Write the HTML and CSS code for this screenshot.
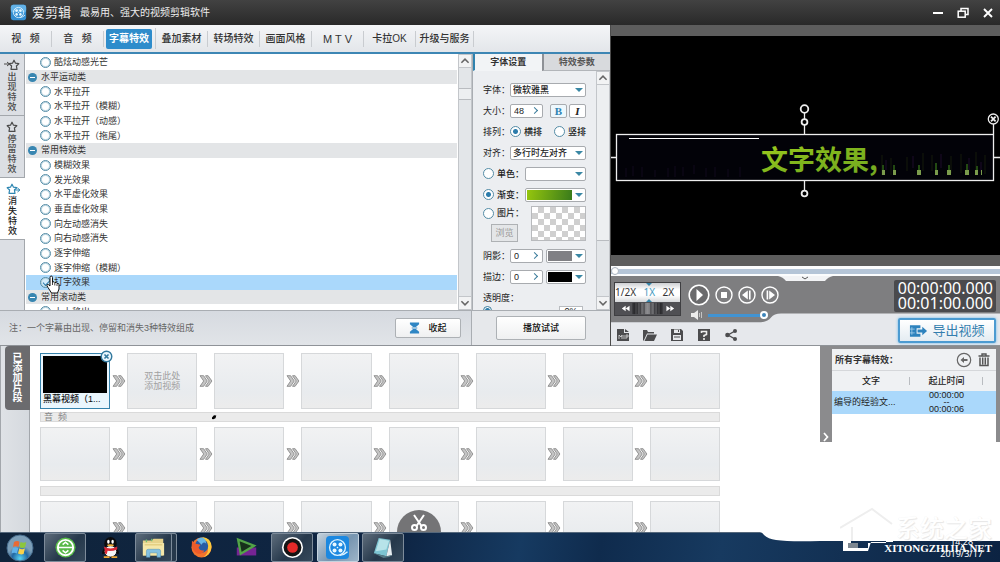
FILE: index.html
```html
<!DOCTYPE html>
<html lang="zh-CN">
<head>
<meta charset="utf-8">
<title>爱剪辑</title>
<link rel="stylesheet" href="styles.css">
</head>
<body>
<svg class="defs" aria-hidden="true">
  <defs>
    <symbol id="arrow" viewBox="0 0 14 12">
      <path d="M1 .7h3.6L8.300 6l-3.700 5.300H1L4.700 6z" fill="#c4c4c4" stroke="#8c8c8c" stroke-width=".9"/>
      <path d="M6.500 .7h2.600L12.900 6l-3.800 5.300H6.500L10.200 6z" fill="#c4c4c4" stroke="#8c8c8c" stroke-width=".9"/>
    </symbol>
    <symbol id="star" viewBox="0 0 12 12">
      <path d="M6 1.200l1.500 3 3.300.5-2.400 2.300.6 3.300H3l.6-3.300-2.400-2.300 3.300-.5z" fill="none" stroke="currentColor" stroke-width="1.200" stroke-linejoin="round"/>
    </symbol>
    <symbol id="up" viewBox="0 0 10 10"><path d="M2 6.500l3-3 3 3" fill="none" stroke="#666" stroke-width="1.300"/></symbol>
    <symbol id="down" viewBox="0 0 10 10"><path d="M2 3.500l3 3 3-3" fill="none" stroke="#666" stroke-width="1.300"/></symbol>
    <symbol id="reel" viewBox="0 0 20 20">
      <circle cx="10" cy="10" r="7.500" fill="none" stroke="#dff3ff" stroke-width="1.300"/>
      <g fill="#e8f7ff"><circle cx="7.200" cy="7.200" r="1.900"/><circle cx="12.800" cy="7.200" r="1.900"/><circle cx="7.200" cy="12.800" r="1.900"/><circle cx="12.800" cy="12.800" r="1.900"/><circle cx="10" cy="10" r=".8"/></g>
      <path d="M12 17.500q4.500-.5 7.500-3.500" fill="none" stroke="#dff3ff" stroke-width="1.300"/>
    </symbol>
  </defs>
</svg>

<header class="titlebar">
  <svg class="logo" viewBox="0 0 20 20"><rect x="1" y="1" width="18" height="18" rx="3" fill="#358fd2"/><rect x="1" y="1" width="18" height="9" rx="3" fill="#62b2e8"/><use href="#reel" x="2" y="2" width="16" height="16"/></svg>
  <h1 class="brand">爱剪辑</h1>
  <p class="slogan">最易用、强大的视频剪辑软件</p>
  <div class="window-buttons">
    <button aria-label="最小化"><svg viewBox="0 0 12 12"><path d="M1 6h10" stroke="#fff" stroke-width="2"/></svg></button>
    <button aria-label="还原"><svg viewBox="0 0 12 12" fill="none" stroke="#fff" stroke-width="1.500"><path d="M4 4V1.500h7v6H8.500"/><rect x="1.200" y="4.200" width="7" height="6"/></svg></button>
    <button aria-label="关闭"><svg viewBox="0 0 12 12"><path d="M2 2l8 8M10 2l-8 8" stroke="#fff" stroke-width="1.900"/></svg></button>
  </div>
</header>

<main class="workspace">
  <section class="editor">
    <nav class="tabs">
      <button class="tab">视&nbsp;&nbsp;&nbsp;频</button>
      <button class="tab">音&nbsp;&nbsp;&nbsp;频</button>
      <button class="tab tab-active"><span>字幕特效</span></button>
      <button class="tab">叠加素材</button>
      <button class="tab">转场特效</button>
      <button class="tab">画面风格</button>
      <button class="tab tab-latin">M T V</button>
      <button class="tab">卡拉OK</button>
      <button class="tab tab-wide">升级与服务</button>
    </nav>

    <div class="effects">
      <div class="phases">
        <button class="phase"><svg viewBox="0 0 16 12"><use href="#star" x="4" y="0" width="12" height="12"/><path d="M0 5h5M3 3l2.500 2L3 7" fill="none" stroke="currentColor"/></svg><span>出现特效</span></button>
        <button class="phase"><svg viewBox="0 0 16 12"><use href="#star" x="2" y="0" width="12" height="12"/></svg><span>停留特效</span></button>
        <button class="phase phase-active"><svg viewBox="0 0 16 12"><use href="#star" x="1" y="0" width="12" height="12"/><path d="M9 7h5M12.500 5L15 7l-2.500 2" fill="none" stroke="currentColor"/></svg><span>消失特效</span></button>
      </div>
      <div class="effect-window">
        <ul class="effect-list">
          <li class="effect"><label><input type="radio" name="fx">酷炫动感光芒</label></li>
          <li class="group"><button>水平运动类</button></li>
          <li class="effect"><label><input type="radio" name="fx">水平拉开</label></li>
          <li class="effect"><label><input type="radio" name="fx">水平拉开（模糊）</label></li>
          <li class="effect"><label><input type="radio" name="fx">水平拉开（动感）</label></li>
          <li class="effect"><label><input type="radio" name="fx">水平拉开（拖尾）</label></li>
          <li class="group"><button>常用特效类</button></li>
          <li class="effect"><label><input type="radio" name="fx">模糊效果</label></li>
          <li class="effect"><label><input type="radio" name="fx">发光效果</label></li>
          <li class="effect"><label><input type="radio" name="fx">水平虚化效果</label></li>
          <li class="effect"><label><input type="radio" name="fx">垂直虚化效果</label></li>
          <li class="effect"><label><input type="radio" name="fx">向左动感消失</label></li>
          <li class="effect"><label><input type="radio" name="fx">向右动感消失</label></li>
          <li class="effect"><label><input type="radio" name="fx">逐字伸缩</label></li>
          <li class="effect"><label><input type="radio" name="fx">逐字伸缩（模糊）</label></li>
          <li class="effect effect-selected"><label><input type="radio" name="fx" checked>打字效果</label>
            <svg class="pointer" viewBox="0 0 14 19"><path d="M4 11V2.500q0-1.500 1.200-1.500T6.500 2.500V7q1.800-.8 2.300.6 1.700-.6 2.200.7 1.900-.3 2 1.400v4.300L11.500 18h-6L2 12.500Q.2 10.300 1.200 9.600 2.400 9 4 11z" fill="#fff" stroke="#111"/><path d="M6.500 7v3M8.800 8v2.500M11 8.500V11" stroke="#111" stroke-width=".8"/></svg>
          </li>
          <li class="group"><button>常用滚动类</button></li>
          <li class="effect"><label><input type="radio" name="fx">上上移出</label></li>
        </ul>
      </div>
      <div class="scrollbar">
        <svg viewBox="0 0 10 10"><use href="#up"/></svg>
        <div class="scroll-track"><div class="scroll-thumb thumb-list"></div></div>
        <svg viewBox="0 0 10 10"><use href="#down"/></svg>
      </div>
    </div>
    <footer class="effects-footer">
      <p>注：一个字幕由出现、停留和消失3种特效组成</p>
      <button class="push collapse"><svg viewBox="0 0 12 14"><path d="M1 1h10v2L7.500 6h-3L1 3zM4.500 8h3L11 11v2H1v-2z" fill="#2f86c4"/><path d="M3 7h6" stroke="#2f86c4"/></svg>收起</button>
    </footer>

    <div class="settings">
      <div class="setting-tabs">
        <button class="setting-tab setting-tab-active">字体设置</button>
        <button class="setting-tab">特效参数</button>
      </div>
      <div class="setting-body">
        <form class="form">
          <div class="row"><label class="name" for="font">字体：</label><span class="select"><select id="font"><option>微软雅黑</option></select></span></div>
          <div class="row"><label class="name" for="size">大小：</label><span class="stepper"><input id="size" value="48"><button type="button" aria-label="调整大小"></button></span><span class="styles"><button type="button" class="mini bold">B</button><button type="button" class="mini italic">I</button></span></div>
          <div class="row"><span class="name">排列：</span><label class="option"><input type="radio" name="dir" checked>横排</label><label class="option option-last"><input type="radio" name="dir">竖排</label></div>
          <div class="row"><label class="name" for="align">对齐：</label><span class="select"><select id="align"><option>多行时左对齐</option></select></span></div>
          <div class="row"><label class="option"><input type="radio" name="fill">单色：</label><button type="button" class="swatch" aria-label="单色"><i></i></button></div>
          <div class="row"><label class="option"><input type="radio" name="fill" checked>渐变：</label><button type="button" class="swatch" aria-label="渐变"><i class="green"></i></button></div>
          <div class="picture">
            <div class="picture-side"><label class="option"><input type="radio" name="fill">图片：</label><button type="button" class="browse" disabled>浏览</button></div>
            <div class="checker"></div>
          </div>
          <div class="row"><label class="name" for="shadow">阴影：</label><span class="stepper"><input id="shadow" value="0"><button type="button" aria-label="调整阴影"></button></span><button type="button" class="swatch swatch-small" aria-label="阴影颜色"><i class="gray"></i></button></div>
          <div class="row"><label class="name" for="stroke">描边：</label><span class="stepper"><input id="stroke" value="0"><button type="button" aria-label="调整描边"></button></span><button type="button" class="swatch swatch-small" aria-label="描边颜色"><i class="black"></i></button></div>
          <div class="row"><label for="opacity">透明度：</label></div>
          <div class="row row-slider"><input id="opacity" class="range" type="range" value="0"><output for="opacity">0%</output></div>
        </form>
        <div class="scrollbar">
          <svg viewBox="0 0 10 10"><use href="#up"/></svg>
          <div class="scroll-track"><div class="scroll-thumb thumb-form"></div></div>
          <svg viewBox="0 0 10 10"><use href="#down"/></svg>
        </div>
      </div>
    </div>
    <footer class="settings-footer"><button class="push">播放试试</button></footer>
  </section>

  <section class="preview">
    <div class="stage">
      <svg viewBox="0 0 389 219">
        <defs>
          <linearGradient id="lime" x1="0" y1="0" x2="1" y2="1"><stop offset="0" stop-color="#a2cf1e"/><stop offset=".5" stop-color="#7fb41d"/><stop offset="1" stop-color="#73a822"/></linearGradient>
        </defs>
        <rect x="5" y="98.500" width="378" height="46" fill="#020208"/>
        <g stroke="#10091d" stroke-width="1"><path d="M15 132v9M22 130v10M31 131v10M44 134v7M57 132v9M64 130v11M72 131v9M83 129v9M95 132v9M104 131v10M117 133v8M129 131v10"/><path d="M271 119v20M280 122v17M296 121v14M312 117v18M321 119v16M340 120v17M350 118v19M365 116v22M374 119v19" stroke="#141b0b"/><path d="M275 124v10M302 120v12M330 118v14M358 122v12M370 126v10" stroke="#1d0a2b"/></g>
        <g fill="none" stroke="#eee" stroke-width="1.300"><rect x="5.500" y="98.500" width="377" height="46"/><path d="M0 121.500h5.500M382.500 121.500h6.500M193.500 98v-9M193.500 83v-6M193.500 145v9M382.500 98V88"/><g stroke-width="1.800"><circle cx="193.500" cy="73" r="3.800"/><circle cx="193.500" cy="86" r="2.900"/><circle cx="193.500" cy="157.500" r="2.900"/></g><circle cx="382.300" cy="83" r="5"/><path d="M380 80.700l4.600 4.600M384.600 80.700l-4.600 4.600" stroke-width="1.800"/></g>
        <path d="M18 102.500h130" stroke="#fff" stroke-width="1.200"/>
        <text x="150" y="134" class="caption" fill="url(#lime)">文字效果,</text>
        <g fill="#7b9c4c"><path d="M271 134h3v5h-3zM282 134h3v5h-3zM306 134h4v5h-4zM324 134h3v5h-3zM336 134h4v5h-4zM354 134h4v5h-4zM364 134h3v5h-3zM370 134h1v5h-1z"/></g><path d="M272 129v5M283 129v5M308 129v5M325 127v7M338 129v5M356 128v6M366 130v4" stroke="#234a12" stroke-width="2"/>
      </svg>
    </div>
    <div class="seek"><input class="seek-range" type="range" value="0" aria-label="播放位置"></div>
    <div class="controls">
      <svg class="controls-shape" viewBox="0 0 389 70" preserveAspectRatio="none"><path d="M0 0H389V38H170Q163 38 160 42T150 47H0z" fill="#7e7e80"/><path d="M167 0h55q-5 1-8 5h-39q-3-4-8-5z" fill="#f2f3f5"/><path d="M191 1l3 2 3-2" fill="none" stroke="#555"/></svg>
      <div class="control-left">
        <div class="transport">
          <div class="speed">
            <div class="speed-values"><span>1/2X</span><span class="speed-on">1X</span><span>2X</span></div>
            <svg class="jog" viewBox="0 0 67 14" preserveAspectRatio="none"><defs><linearGradient id="wheel"><stop offset="0" stop-color="#2b2b2e"/><stop offset=".5" stop-color="#8d8d90"/><stop offset="1" stop-color="#2b2b2e"/></linearGradient></defs><rect width="67" height="14" fill="#505054"/><path d="M11 4L7 7l4 3zM15 4l-4 3 4 3zM53 4l4 3-4 3zM57 4l4 3-4 3z" fill="#fff"/><rect x="18" y="1" width="31" height="12" fill="url(#wheel)"/><g stroke="#242427" stroke-width=".7"><path d="M20 1v12M23 1v12M26 1v12M30 1v12M37 1v12M41 1v12M44 1v12M47 1v12"/></g></svg>
          </div>
          <div class="play-column">
            <div class="play-row">
              <button class="play" aria-label="播放"><svg viewBox="0 0 22 22"><circle cx="11" cy="11" r="9.800" fill="#6a6a6c" stroke="#fff" stroke-width="1.600"/><path d="M8.500 5l6.500 6-6.500 6z" fill="#fff"/></svg></button>
              <button aria-label="停止"><svg viewBox="0 0 18 18"><circle cx="9" cy="9" r="8" fill="none" stroke="#fff" stroke-width="1.400"/><path d="M6 6h6v6H6z" fill="#fff"/></svg></button>
              <button aria-label="上一帧"><svg viewBox="0 0 18 18"><circle cx="9" cy="9" r="8" fill="none" stroke="#fff" stroke-width="1.400"/><path d="M9.800 4.500v9L4 9zM11 4.500h1.600v9H11z" fill="#fff"/></svg></button>
              <button aria-label="下一帧"><svg viewBox="0 0 18 18"><circle cx="9" cy="9" r="8" fill="none" stroke="#fff" stroke-width="1.400"/><path d="M8.200 4.500v9L14 9zM5.600 4.500h1.600v9H5.600z" fill="#fff"/></svg></button>
            </div>
            <div class="volume">
              <svg viewBox="0 0 14 10"><path d="M1 3h3l4-3v10L4 7H1z" fill="#ececec"/><path d="M9.500 3v4M11.500 2v6" stroke="#c4c4c4"/></svg>
              <input type="range" value="100" aria-label="音量">
            </div>
          </div>
        </div>
        <div class="tools">
          <button aria-label="新建"><svg viewBox="0 0 14 14"><path d="M1 1h7v4h5v8H1zM9 1l4 3H9z" fill="#4c4c4e"/><path d="M3 11V7l2 2 1-2v4M8 7v4M10 11V7h2v2h-2" stroke="#ddd" stroke-width=".8" fill="none"/></svg></button>
          <button aria-label="打开"><svg viewBox="0 0 14 14"><path d="M0 13V2h4l1 2h6v1.500H4L1 12z" fill="#4c4c4e"/><path d="M4.500 6.500H14L11 13H1.500z" fill="#4c4c4e"/></svg></button>
          <button aria-label="保存"><svg viewBox="0 0 14 14"><path d="M1 1h10l2 2v10H1z" fill="#4c4c4e"/><path d="M4 1.500h6V5H4zM3 7h8v5H3z" fill="#e6e7ea"/><path d="M4 9h6M8.500 2v2" stroke="#4c4c4e"/></svg></button>
          <button aria-label="帮助"><svg viewBox="0 0 14 14"><path d="M1 1h12v12H1z" fill="#4c4c4e"/><path d="M4.500 5V3.500h5V6.500L7 7.500V9M7 10v2" stroke="#eee" stroke-width="1.600" fill="none"/></svg></button>
          <button aria-label="分享"><svg viewBox="0 0 14 14"><path d="M11 3L4 7l7 4" stroke="#4c4c4e" stroke-width="1.400" fill="none"/><g fill="#4c4c4e"><circle cx="11" cy="3" r="2"/><circle cx="3.500" cy="7" r="2.300"/><circle cx="11" cy="11" r="2"/></g></svg></button>
        </div>
      </div>
      <div class="control-right">
        <div class="timecode"><time>00:00:00.000</time><time>00:01:00.000</time></div>
        <button class="export"><svg viewBox="0 0 20 14"><path d="M1 1h11v3H8v6h4v3H1z" fill="#2d82bd"/><path d="M3 3v8M1 5h5M1 9h5" stroke="#a9d4ef" stroke-width=".8"/><path d="M9 5.500h5V2.500L19 7l-5 4.500v-3H9z" fill="#2d82bd"/></svg>导出视频</button>
      </div>
    </div>
  </section>
</main>

<section class="project">
  <aside class="project-side"><button>已添加片段</button></aside>
  <div class="timeline">
    <ol class="slots">
      <li class="slot clip"><div class="thumb"></div><span>黑幕视频（1...</span><button class="remove" aria-label="移除"><svg viewBox="0 0 14 14"><circle cx="7" cy="7" r="5.700" fill="#e9f6fd" stroke="#33799e" stroke-width="1.500"/><path d="M4.800 4.800l4.400 4.400M9.200 4.800L4.800 9.200" stroke="#33799e" stroke-width="1.700"/></svg></button></li>
      <li class="next"><svg><use href="#arrow"/></svg></li><li class="slot hint">双击此处<br>添加视频</li>
      <li class="next"><svg><use href="#arrow"/></svg></li><li class="slot"></li>
      <li class="next"><svg><use href="#arrow"/></svg></li><li class="slot"></li>
      <li class="next"><svg><use href="#arrow"/></svg></li><li class="slot"></li>
      <li class="next"><svg><use href="#arrow"/></svg></li><li class="slot"></li>
      <li class="next"><svg><use href="#arrow"/></svg></li><li class="slot"></li>
      <li class="next"><svg><use href="#arrow"/></svg></li><li class="slot"></li>
    </ol>
    <div class="audio">音&nbsp;&nbsp;频<svg class="dot" viewBox="0 0 6 6"><path d="M1 3.500l2-2.300 2.300.3-.8 2.700L2.300 5.300 1 5z"/></svg></div>
    <ol class="slots">
      <li class="slot"></li>
      <li class="next"><svg><use href="#arrow"/></svg></li><li class="slot"></li>
      <li class="next"><svg><use href="#arrow"/></svg></li><li class="slot"></li>
      <li class="next"><svg><use href="#arrow"/></svg></li><li class="slot"></li>
      <li class="next"><svg><use href="#arrow"/></svg></li><li class="slot"></li>
      <li class="next"><svg><use href="#arrow"/></svg></li><li class="slot"></li>
      <li class="next"><svg><use href="#arrow"/></svg></li><li class="slot"></li>
      <li class="next"><svg><use href="#arrow"/></svg></li><li class="slot"></li>
    </ol>
    <div class="audio"></div>
    <ol class="slots">
      <li class="slot"></li>
      <li class="next"><svg><use href="#arrow"/></svg></li><li class="slot"></li>
      <li class="next"><svg><use href="#arrow"/></svg></li><li class="slot"></li>
      <li class="next"><svg><use href="#arrow"/></svg></li><li class="slot"></li>
      <li class="next"><svg><use href="#arrow"/></svg></li><li class="slot"></li>
      <li class="next"><svg><use href="#arrow"/></svg></li><li class="slot"></li>
      <li class="next"><svg><use href="#arrow"/></svg></li><li class="slot"></li>
      <li class="next"><svg><use href="#arrow"/></svg></li><li class="slot"></li>
    </ol>
    <button class="cut" aria-label="剪切"><svg viewBox="0 0 44 22"><circle cx="22" cy="22" r="22" fill="#747476"/><g fill="none" stroke="#fff" stroke-width="2"><path d="M17 5l7.500 11M27 5l-7.500 11"/><circle cx="17.500" cy="17.500" r="2.500"/><circle cx="26.500" cy="17.500" r="2.500"/></g></svg></button>
  </div>
  <aside class="captions">
    <div class="handle"><svg viewBox="0 0 6 10"><path d="M1 1l3.500 4L1 9" fill="none" stroke="#fff" stroke-width="1.700"/></svg></div>
    <div class="captions-panel">
      <div class="captions-head"><h2>所有字幕特效：</h2>
        <button aria-label="返回"><svg viewBox="0 0 16 16"><circle cx="8" cy="8" r="6.700" fill="none" stroke="#666" stroke-width="1.200"/><path d="M4.500 8l3.500-3v2h3.500v2H8v2z" fill="#666"/></svg></button>
        <button aria-label="删除"><svg viewBox="0 0 16 16"><path d="M2.500 4h11M6 3.500V2h4v1.500" stroke="#555" stroke-width="1.400" fill="none"/><path d="M4 5.500v8h8v-8M6.700 5.500v7M9.300 5.500v7" stroke="#555" stroke-width="1.500" fill="none"/></svg></button>
      </div>
      <table>
        <thead><tr><th class="col-text">文字</th><th class="col-time">起止时间</th><th></th></tr></thead>
        <tbody><tr><td>编导的经验文...</td><td class="range-cell">00:00:00<br>--<br>00:00:06</td><td></td></tr></tbody>
      </table>
    </div>
  </aside>
</section>

<footer class="taskbar">
  <button class="start" aria-label="开始"><svg viewBox="0 0 28 28"><defs><radialGradient id="orb" cx=".5" cy=".9"><stop offset="0" stop-color="#58d3f2"/><stop offset=".6" stop-color="#2168a4"/><stop offset="1" stop-color="#7d9fb8"/></radialGradient></defs><circle cx="14" cy="14" r="13" fill="url(#orb)" stroke="#466c8d"/><path d="M8 8q3-2 5.500-.3L12.500 13Q10 11.500 7 13z" fill="#ea6a35"/><path d="M14.500 8q3 1.500 5.800.1L19 13.500q-3 1-5.500-.2z" fill="#8cc63c"/><path d="M6.700 14q3-1.500 5.600 0L11 19.500q-3-1.500-5.500 0z" fill="#5fb2ea"/><path d="M13.200 14.500q3 1.300 5.700.1L17.600 20q-3 1-5.600-.4z" fill="#fad14a"/></svg></button>
  <ul class="apps">
    <li class="app app-open"><svg viewBox="0 0 24 24"><circle cx="12" cy="12" r="10.500" fill="#57b947"/><circle cx="12" cy="12" r="8" fill="none" stroke="#fff" stroke-width="2"/><path d="M4 12h16M9 9l3-2.500L15 9M9 15l3 2.500 3-2.500" stroke="#fff" stroke-width="1.700" fill="none"/></svg></li>
    <li class="app"><svg viewBox="0 0 24 24"><ellipse cx="12" cy="8" rx="6.500" ry="7" fill="#0b0b0d"/><path d="M5 13q-3 5-1 6 1 0 2-2zM19 13q3 5 1 6-1 0-2-2z" fill="#0b0b0d"/><ellipse cx="12" cy="16" rx="6.500" ry="6" fill="#f6f6f6" stroke="#111"/><path d="M5 11q7 4 14 0v3q-5 2-10 1.500L8 19l-2-1v-4z" fill="#da2836"/><ellipse cx="9.800" cy="6" rx="1.300" ry="2" fill="#fff"/><ellipse cx="14.200" cy="6" rx="1.300" ry="2" fill="#fff"/><ellipse cx="12" cy="9.700" rx="3.500" ry="1.100" fill="#f3b33c"/><path d="M5 22h6M13 22h6" stroke="#f0a632" stroke-width="2"/></svg></li>
    <li class="app app-open app-stack"><svg viewBox="0 0 26 24"><path d="M1 4h10l2-2h11v19H1z" fill="#e7d28a"/><path d="M1 7h24v14H1z" fill="#f5e7a9"/><path d="M3 9h20" stroke="#d8bd66"/><path d="M5 23v-7q0-2 2-2h12q2 0 2 2v7h-4v-5H9v5z" fill="#83c1e3" stroke="#5393b8" stroke-width=".6"/><path d="M5 3v3M11 2v3" stroke="#73bd72" stroke-width="1.500"/></svg></li>
    <li class="app"><svg viewBox="0 0 24 24"><circle cx="12" cy="12" r="10.500" fill="#f3732d"/><path d="M13 1q9 1 9.500 10Q22 20 14 22q7-5 4-11-1-5-5-6z" fill="#fbc93c"/><circle cx="12" cy="10.500" r="7" fill="#285da4"/><path d="M7 4q5-5 9 0l1 4q-3-3-5 1z" fill="#68b7e4"/><path d="M2 5l4 3 5 1-2 3q1 4 6 3-3 5-8 3-6-3-5-13z" fill="#ed5b2b"/></svg></li>
    <li class="app"><svg viewBox="0 0 26 24"><path d="M2 12h22v9H2z" fill="#762494"/><path d="M3.500 3l18 7L6.500 19z" fill="#17301b" stroke="#53a448" stroke-width="2.600"/></svg></li>
    <li class="app app-open"><svg viewBox="0 0 24 24"><circle cx="12" cy="12" r="11" fill="#fff"/><circle cx="12" cy="12" r="9.300" fill="#141414"/><circle cx="12" cy="12" r="5.600" fill="#e52a29"/></svg></li>
    <li class="app app-open app-front"><svg viewBox="0 0 24 24"><rect width="24" height="24" rx="4" fill="#1c88e0"/><use href="#reel" x="1" y="1" width="22" height="22"/></svg></li>
    <li class="app app-open"><svg viewBox="0 0 24 24"><path d="M8 2l12 2-4 17-13-3z" fill="#7dc4d2"/><path d="M9 3l10 2-3 9L5 16z" fill="#b7e3e9"/><path d="M20 4l2 16-6 1z" fill="#e7edf0"/><path d="M3 18l13 3 6-1-3 2-6 1z" fill="#557a86"/></svg></li>
  </ul>
  <svg class="brush" viewBox="0 0 240 10" preserveAspectRatio="none"><path d="M0 0h240v9H60Q30 10 16 8 8 7 4 3 2 0 0 0z" fill="#fff"/></svg>
  <div class="clock"><time>14:28</time><time>2019/3/17</time></div>
  <div class="mark">
    <svg class="house" viewBox="0 0 60 50"><path d="M0 23L32 4l20 15M12 22v14" fill="none" stroke="#eeeeee" stroke-width="2"/><path d="M3 26h8v17h17v-5h18v-4H27v-4h17v-4h9v11H31l-3 9H3z" fill="#fff"/><path d="M8 38h10v5H8z" fill="#7d8791"/></svg>
    <div class="mark-text"><strong>系统之家</strong><span>XITONGZHIJIA.NET</span></div>
  </div>
</footer>
</body>
</html>
```

FILE: styles.css
```css
* { box-sizing: border-box; }

html, body { height: 100%; }

body {
  margin: 0;
  display: grid;
  grid-template-rows: 25px minmax(0, 321fr) minmax(0, 186fr) 30px;
  overflow: hidden;
  font: 9px/14px "Liberation Sans", "Noto Sans CJK SC", sans-serif;
  color: #333;
  background: #fff;
}

button, input, select, output { font: inherit; color: inherit; }
button { padding: 0; border: 0; background: none; white-space: nowrap; }
svg { display: block; flex: none; }
ul, ol { list-style: none; margin: 0; padding: 0; }
p, h1, h2 { margin: 0; font-weight: normal; }
.defs { position: absolute; width: 0; height: 0; }

/* title bar */
.titlebar {
  display: flex;
  align-items: center;
  padding: 0 6px 0 10px;
  background: linear-gradient(#424242, #292929);
  color: #ececec;
}
.logo { width: 17px; height: 17px; margin-right: 5px; }
.brand { font-size: 13px; margin-right: 9px; }
.slogan { font-size: 10px; }
.window-buttons { display: flex; gap: 13px; margin-left: auto; }
.window-buttons svg { width: 12px; height: 12px; }

/* workspace */
.workspace { display: grid; grid-template: minmax(0, 1fr) / minmax(0, 61fr) minmax(0, 39fr); }
.editor {
  display: grid;
  grid-template-columns: minmax(0, 1fr) 138px;
  grid-template-rows: 29px minmax(0, 1fr) 35px;
  min-height: 0;
  border-bottom: 1px solid #8f9398;
  background: #eceef1;
}
.tabs {
  grid-column: 1 / 3;
  display: flex;
  border-bottom: 2px solid #3d86b4;
  background: linear-gradient(#f4f5f7, #e3e6ea);
}
.tab {
  width: 52px;
  margin: 6px 0 5px;
  border-right: 1px solid #c9ccd0;
  font-size: 10px;
  font-weight: 500;
}
.tab-latin { font-size: 11px; }
.tab-wide { width: 58px; }
.tab-active { position: relative; margin: 3px 0; }
.tab-active span {
  display: block;
  margin: 0 3px 0 2px;
  border-radius: 2px;
  background: #2e8ccb;
  color: #fff;
  font-weight: bold;
  line-height: 20px;
}
.tab-active::after {
  content: "";
  position: absolute;
  left: 24px;
  bottom: -3px;
  border: 3px solid transparent;
  border-top-color: #2e8ccb;
}

.effects { display: flex; min-height: 0; background: #fff; }
.phases { width: 25px; border-right: 1px solid #a3a7ac; background: #dcdfe4; }
.phase {
  display: flex;
  flex-direction: column;
  align-items: center;
  gap: 1px;
  width: 100%;
  height: 62px;
  padding-top: 5px;
  border-bottom: 1px solid #a3a7ac;
  color: #4b4b4b;
}
.phase svg { width: 16px; height: 12px; }
.phase span { width: 9px; font-weight: 500; line-height: 10px; white-space: normal; }
.phase-active { width: 25px; background: #fff; color: #222; }
.phase-active svg { color: #3087b2; }

.effect-window { flex: 1; min-width: 0; overflow: hidden; }
.effect-list { display: flex; flex-direction: column; height: calc(100% + 9px); padding: 1px 1px 0; }
.effect, .group { flex: 1 1 0; min-height: 0; display: flex; align-items: center; }
.effect { padding-left: 14px; position: relative; }
.effect label { display: flex; align-items: center; gap: 3px; }
.effect-selected { background: #aad8fb; }
.group { padding-left: 2px; background: #e3e5e7; }
.group button { display: flex; align-items: center; gap: 4px; }
.group button::before {
  content: "";
  width: 9px;
  height: 9px;
  border-radius: 50%;
  background: linear-gradient(#fff, #fff) center / 5px 1px no-repeat #3886b1;
}
.pointer { position: absolute; left: 20px; top: 0; width: 14px; height: 19px; z-index: 2; }

input[type="radio"] {
  appearance: none;
  flex: none;
  width: 11px;
  height: 11px;
  margin: 0;
  border: 1px solid #548ca6;
  border-radius: 50%;
  background: #fff;
}
.effect input[type="radio"] { box-shadow: inset 0 0 0 1px #b9d4e0; }
.form input[type="radio"]:checked { background: radial-gradient(#2c7cab 0 2px, #fff 3px); }
.effect input[type="radio"]:checked { background: #d4ecfb; }
.effect input[type="radio"]:checked::after {
  content: "";
  display: block;
  width: 6px;
  height: 3px;
  margin: 2px 0 0 2px;
  border: solid #2c7cab;
  border-width: 0 0 1px 1px;
  transform: rotate(-45deg);
}

.scrollbar {
  flex: none;
  display: flex;
  flex-direction: column;
  width: 14px;
  border: 1px solid #c3c6ca;
  background: #e3e6e9;
}
.scrollbar svg { width: 12px; height: 12px; background: #f2f3f4; }
.scroll-track { flex: 1; display: flex; flex-direction: column; border: solid #c3c6ca; border-width: 1px 0; }
.scroll-thumb { background: #edeff1; border-bottom: 1px solid #b9bcc0; }
.thumb-list { height: 12px; margin-top: 20px; border-top: 1px solid #b9bcc0; }
.thumb-form { height: 156px; }

.effects-footer, .settings-footer { display: flex; align-items: center; border-top: 1px solid #a9adb2; background: linear-gradient(#d6dae0, #e1e4e8); }
.effects-footer { grid-area: 3 / 1; justify-content: space-between; padding: 0 10px 0 9px; border-right: 1px solid #a9adb2; color: #666; }
.settings-footer { grid-area: 3 / 2; background: #e6e8eb; }
.settings-footer .push { width: 90px; height: 24px; margin-left: 24px; }
.push { display: flex; align-items: center; justify-content: center; gap: 8px; border: 1px solid #adb1b5; border-radius: 2px; background: linear-gradient(#fff, #eff0f1); color: #111; font-weight: 500; }
.collapse { width: 66px; height: 20px; }
.collapse svg { width: 11px; height: 14px; }

/* font settings */
.settings { grid-area: 2 / 2; display: flex; flex-direction: column; min-height: 0; border-left: 1px solid #a9adb2; }
.setting-tabs { display: flex; height: 17px; flex: none; }
.setting-tab { flex: 1; border-left: 2px solid #8e9196; border-bottom: 1px solid #b2b5b9; background: #d8dadd; color: #555; font-weight: bold; }
.setting-tab-active { border-left-color: #2f82ae; border-bottom-color: transparent; background: #f2f4f6; color: #333; }
.setting-body { flex: 1; display: flex; min-height: 0; }
.form { flex: 1; min-width: 0; overflow: hidden; padding: 8px 10px 0 10px; }
.row { display: flex; align-items: center; height: 21px; white-space: nowrap; color: #222; }
.name { flex: none; width: 27px; }
.select { position: relative; flex: 1; min-width: 0; }
.select select { display: block; appearance: none; width: 100%; height: 14px; padding: 0 2px; line-height: 12px; font-weight: 500; }
.select select, .stepper, .mini, .swatch { border: 1px solid #a8abaf; border-radius: 2px; background: #fff; }
.select::after, .swatch::after { content: ""; border: solid transparent; border-width: 4px 4px 0; border-top-color: #3a87a4; }
.select::after { position: absolute; right: 3px; top: 5px; }
.stepper { display: flex; align-items: center; flex: none; width: 33px; height: 14px; }
.stepper input { width: 21px; padding: 0 0 0 3px; border: 0; background: none; line-height: 12px; }
.stepper button { width: 5px; height: 5px; border: solid #397b9b; border-width: 1px 1px 0 0; transform: rotate(45deg); }
.styles { display: flex; gap: 2px; margin-left: auto; }
.mini { width: 17px; height: 14px; font: bold 11px/12px "Liberation Serif", serif; }
.bold { color: #2d83b3; background: #eef8fd; }
.italic { font-style: italic; }
.option { display: flex; align-items: center; gap: 3px; font-weight: 500; }
.option-last { margin-left: auto; }
.swatch { display: flex; align-items: center; width: 61px; height: 14px; margin-left: auto; padding: 1px 2px 1px 1px; }
.swatch i { flex: 1; align-self: stretch; margin-right: 3px; }
.swatch-small { width: 40px; }
.green { background: linear-gradient(100deg, #96c60d, #397b1b); }
.gray { background: #808084; }
.black { background: #000; }
.picture { display: flex; justify-content: space-between; height: 40px; padding-top: 1px; }
.picture-side { display: flex; flex-direction: column; align-items: flex-end; gap: 4px; }
.browse { width: 27px; height: 18px; margin-right: 6px; border: 1px solid #aeb1b4; background: #e4e6e8; color: #999; }
.checker { width: 55px; height: 35px; border: 1px solid #b8babd; background: repeating-conic-gradient(#cfcfcf 0 25%, #fff 0 50%) 0 0 / 12px 12px; }
.row-slider { height: 6px; gap: 6px; }

input[type="range"] { appearance: none; margin: 0; min-width: 0; background: none; }
.range { width: 70px; height: 8px; }
.range::-webkit-slider-runnable-track { height: 2px; background: #85898d; }
.range::-webkit-slider-thumb { appearance: none; width: 9px; height: 9px; margin-top: -4px; border: 1px solid #397b9b; border-radius: 50%; background: radial-gradient(#2c7cab 0 2px, #fff 3px); }
.row-slider output { width: 24px; border: 1px solid #b9bcc0; background: #fff; text-align: center; line-height: 9px; }

/* preview */
.preview { display: flex; flex-direction: column; min-height: 0; border-left: 1px solid #4c4c4c; }
.stage { flex: 1; min-height: 0; border: solid #5d5d5d; border-width: 11px 0; background: #000; }
.stage svg { width: 100%; height: 100%; }
.caption { font: bold 27px "Noto Sans CJK SC", sans-serif; }
.seek { display: flex; align-items: center; height: 10px; background: #fbfcfd; }
.seek-range { width: 100%; height: 8px; }
.seek-range::-webkit-slider-runnable-track { height: 5px; background: #b5c5d7; }
.seek-range::-webkit-slider-thumb { appearance: none; width: 8px; height: 8px; margin-top: -2px; border: 1px solid #aab4bf; border-radius: 50%; background: #fff; }
.controls { position: relative; display: flex; justify-content: space-between; height: 70px; border-bottom: 1px solid #8f9398; background: #e6e8ec; }
.controls-shape { position: absolute; inset: 0; width: 100%; height: 100%; }
.control-left, .control-right { position: relative; }
.control-left { padding: 6px 0 0 3px; }
.transport { display: flex; gap: 7px; height: 40px; }
.speed { width: 67px; height: 34px; border: 1px solid #3f3f42; }
.speed-values { display: flex; justify-content: space-between; padding: 0 6px 0 0; background: linear-gradient(#cdcfd2, #fff 35%, #fff 65%, #d5d7d9); font: 10px/19px "Noto Sans", sans-serif; }
.speed-on { position: relative; color: #3e9ac0; }
.speed-on::before, .speed-on::after { content: ""; position: absolute; left: 3px; border: 3px solid transparent; }
.speed-on::before { top: 0; border-top-color: #3583a8; border-bottom: 0; }
.speed-on::after { bottom: 0; border-bottom-color: #3583a8; border-top: 0; }
.jog { width: 100%; height: 13px; }
.play-row { display: flex; align-items: center; gap: 5px; height: 26px; }
.play-row svg { width: 18px; height: 18px; }
.play-row .play svg { width: 22px; height: 22px; }
.volume { display: flex; align-items: center; gap: 4px; height: 14px; padding-left: 2px; }
.volume svg { width: 14px; height: 10px; }
.volume input { width: 60px; height: 10px; }
.volume input::-webkit-slider-runnable-track { height: 3px; background: #4193d2; }
.volume input::-webkit-slider-thumb { appearance: none; width: 8px; height: 8px; margin-top: -3px; border: 2px solid #fff; border-radius: 50%; background: #3c84ba; }
.tools { display: flex; gap: 13px; padding: 6px 0 0 2px; }
.tools svg { width: 14px; height: 14px; }
.control-right { display: flex; flex-direction: column; align-items: flex-end; gap: 6px; padding: 4px 4px 0 0; }
.timecode { display: flex; flex-direction: column; padding: 1px 3px 1px 4px; border-radius: 2px; background: #4a4a4d; color: #fff; font: 16px/15px "Noto Sans", sans-serif; }
.export { display: flex; align-items: center; justify-content: center; gap: 4px; width: 98px; height: 25px; border: 2px solid #4c9bd1; border-radius: 2px; background: linear-gradient(#fff, #e4ecf2); box-shadow: 0 0 3px #66b8ed; color: #337eae; font-size: 13px; }
.export svg { width: 19px; height: 14px; }

/* project area */
.project { display: flex; min-height: 0; overflow: hidden; }
.project-side { flex: none; width: 30px; padding-left: 4px; border-left: 1px solid #a3a7ac; border-right: 1px solid #a3a7ac; background: linear-gradient(90deg, #dfe2e6, #d5d9de); }
.project-side button { width: 25px; height: 64px; padding: 0 7px; border-radius: 4px 0 0 4px; background: #6b6b6e; color: #fff; font-size: 10px; line-height: 10px; font-weight: bold; white-space: normal; }
.timeline { position: relative; flex: 1; min-width: 0; display: flex; flex-direction: column; gap: 5px; padding: 7px 100px 0 10px; overflow: hidden; }
.slots { display: grid; grid-template-columns: repeat(7, minmax(0, 1fr) 17px) minmax(0, 1fr); flex: none; height: 54px; }
.slot { border: 1px solid #d6d8da; background: linear-gradient(#f1f2f3, #e8ebee 70%, #ececec); }
.next { display: flex; align-items: center; justify-content: center; }
.next svg { width: 14px; height: 12px; }
.clip { position: relative; border: 1px solid #3682ab; padding: 2px; background: #eaf6fd; color: #111; white-space: nowrap; line-height: 13px; font-weight: 500; }
.thumb { height: 37px; background: #000; }
.remove { position: absolute; right: -4px; top: -4px; z-index: 1; }
.remove svg { width: 13px; height: 13px; }
.hint { display: flex; align-items: center; justify-content: center; color: #a0a0a0; line-height: 10px; }
.audio { position: relative; flex: none; height: 10px; padding-left: 3px; border: 1px solid #dadada; background: #ebebeb; color: #888; line-height: 8px; }
.dot { position: absolute; left: 25%; top: 1px; width: 6px; height: 6px; }
.cut { position: absolute; left: 46%; bottom: 0; margin-left: 4px; }
.cut svg { width: 44px; height: 22px; }

.captions { display: flex; flex: none; align-self: flex-start; width: 180px; height: 96px; border-right: 4px solid #8b8b8d; background: #8b8b8d; }
.handle { display: flex; align-items: flex-end; width: 12px; padding-left: 3px; }
.handle svg { width: 6px; height: 10px; }
.captions-panel { flex: 1; margin-top: 3px; background: #fff; }
.captions-head { display: flex; align-items: center; gap: 4px; height: 21px; padding: 0 4px 0 3px; background: #eff1f3; }
.captions-head h2 { flex: 1; font-size: 9px; font-weight: bold; white-space: nowrap; }
.captions-head svg { width: 16px; height: 16px; }
table { width: 100%; border-collapse: collapse; table-layout: fixed; color: #222; }
th { height: 20px; padding: 0; border-top: 1px solid #d5d7da; background: linear-gradient(#b9bcc0, #b9bcc0) right / 1px 8px no-repeat #eff1f3; font-weight: 500; }
th:last-child { background: #eff1f3; }
.col-text { width: 78px; }
.col-time { width: 73px; }
td { height: 23px; padding: 0 0 0 2px; background: #aad8fb; white-space: nowrap; }
.range-cell { padding: 0; text-align: center; line-height: 7px; }

/* taskbar */
.taskbar { position: relative; display: flex; align-items: stretch; border-top: 1px solid #55687c; background: linear-gradient(100deg, #10243b, #0e2544 40%, #163a61 52%, #0f2b4d 60%, #173a60 72%, #0c2342); }
.start { width: 40px; }
.start svg { width: 28px; height: 28px; margin: 0 auto; }
.apps { display: flex; justify-content: space-between; width: 360px; margin-left: 4px; }
.app { display: flex; align-items: center; justify-content: center; width: 42px; border: 1px solid transparent; border-radius: 2px; }
.app svg { width: 23px; height: 23px; }
.app-open { border-color: #7d8b9a; background: linear-gradient(135deg, #5d6c7b, #26384b 55%, #35485b); }
.app-front { border-color: #c4d2de; background: linear-gradient(135deg, #c3d0db, #7795b0 55%, #9db4c8); }
.app-stack { box-shadow: inset -4px 0 #26384b, inset -5px 0 #7d8b9a; padding-right: 4px; }
.brush { position: absolute; right: 0; top: -1px; width: 24%; height: 10px; }
.clock { position: absolute; right: 17px; bottom: 2px; display: flex; flex-direction: column; align-items: center; color: #fff; font: 9px/12px "Noto Sans", sans-serif; }
.mark { position: absolute; right: 8px; bottom: 7px; display: flex; align-items: flex-end; }
.house { width: 60px; height: 50px; margin: 0 -16px 0 0; }
.mark-text { position: relative; display: flex; flex-direction: column; align-items: flex-end; color: #fff; }
.mark-text strong { font-size: 24px; line-height: 25px; font-weight: 500; text-shadow: 1px 1px 1px #e6e6e6, 0 0 1px #eeeeee; }
.mark-text span { font: bold 11px/14px "Liberation Serif", serif; }
```
